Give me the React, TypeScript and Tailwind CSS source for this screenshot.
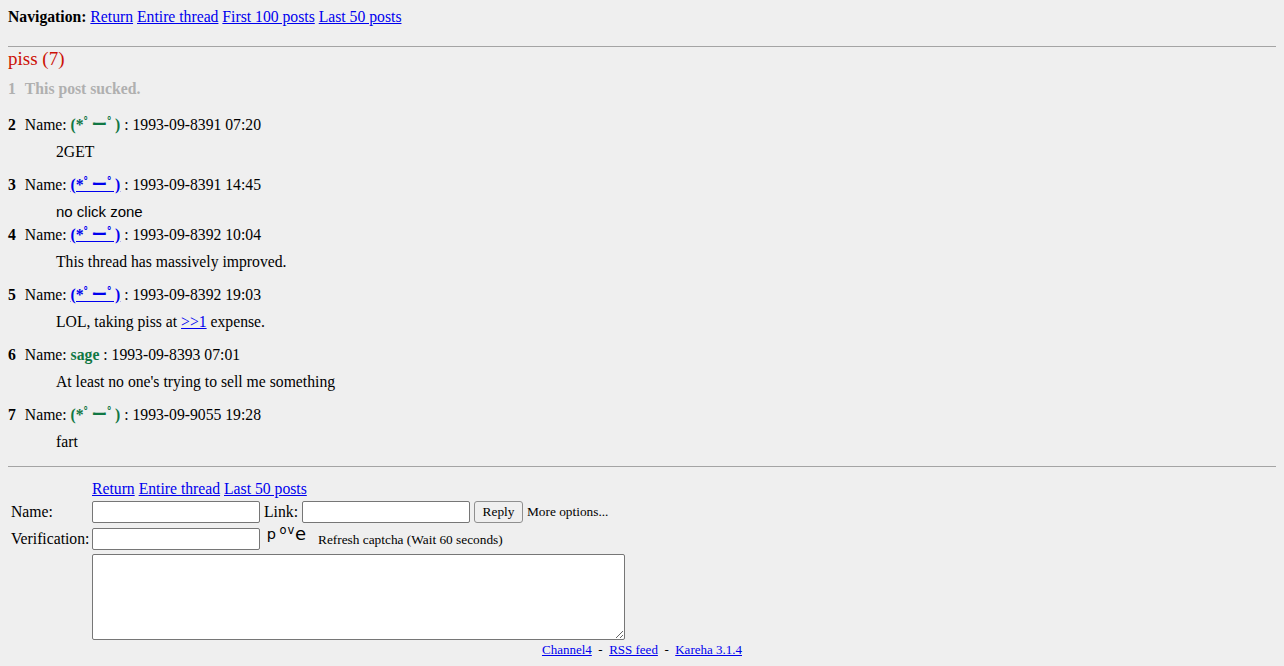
import React from "react";

type Post = {
  no: number;
  name: string;
  link?: boolean;
  date: string;
  body: React.ReactNode;
  sans?: boolean;
  tight?: boolean;
};

const FACE = "(*ﾟーﾟ)";

const posts: Post[] = [
  { no: 2, name: FACE, date: "1993-09-8391 07:20", body: "2GET" },
  { no: 3, name: FACE, link: true, date: "1993-09-8391 14:45", body: "no click zone", sans: true, tight: true },
  { no: 4, name: FACE, link: true, date: "1993-09-8392 10:04", body: "This thread has massively improved." },
  {
    no: 5,
    name: FACE,
    link: true,
    date: "1993-09-8392 19:03",
    body: (
      <>
        LOL, taking piss at{" "}
        <a href="#" className="text-[#0000ee] underline">
          &gt;&gt;1
        </a>{" "}
        expense.
      </>
    ),
  },
  { no: 6, name: "sage", date: "1993-09-8393 07:01", body: "At least no one's trying to sell me something" },
  { no: 7, name: FACE, date: "1993-09-9055 19:28", body: "fart" },
];

// captcha picture, letters jumbled like the generated image
const Captcha = () => (
  <svg width="50" height="22" viewBox="0 0 50 22" overflow="visible" className="block shrink-0">
    <g fill="#000" fontFamily="'DejaVu Sans', sans-serif">
      <text x="0.7" y="11" fontSize="14.5">p</text>
      <text x="13.5" y="6" fontSize="11.5">o</text>
      <text x="21.5" y="6" fontSize="11.5">v</text>
      <text x="29" y="11.5" fontSize="18">e</text>
    </g>
  </svg>
);

export default function App() {
  return (
    <div
      className="min-h-screen bg-[#efefef] p-2 text-[15.7px] leading-[18px] text-black"
      style={{ fontFamily: "'Liberation Serif', 'Noto Sans CJK JP', serif" }}
    >
      {/* top navigation */}
      <div>
        <b>Navigation:</b>{" "}
        <a href="#" className="text-[#0000ee] underline">Return</a>{" "}
        <a href="#" className="text-[#0000ee] underline">Entire thread</a>{" "}
        <a href="#" className="text-[#0000ee] underline">First 100 posts</a>{" "}
        <a href="#" className="text-[#0000ee] underline">Last 50 posts</a>
      </div>

      <div className="mt-[20px] border-t border-[#a4a4a4]" />

      <h2 className="text-[19px] leading-[23px] text-[#cc1105]">piss (7)</h2>

      {/* deleted post */}
      <div className="mt-[10px] font-bold text-[#b0b0b0]">
        <span className="mr-[9px]">1</span>This post sucked.
      </div>

      <div className="mt-[18px]">
        {posts.map((p) => (
          <div key={p.no} className={p.tight ? "mb-[5px]" : "mb-[15px]"}>
            <div className="whitespace-nowrap">
              <b className="mr-[9px]">{p.no}</b>
              Name:{" "}
              {p.link ? (
                <a href="#" className="font-bold text-[#0000ee] underline">{p.name}</a>
              ) : (
                <b className="text-[#117743]">{p.name}</b>
              )}{" "}
              : {p.date}
            </div>
            <div
              className={`mt-[9px] ml-[48px] ${p.sans ? "text-[15px]" : ""}`}
              style={p.sans ? { fontFamily: "'Liberation Sans', Arial, sans-serif" } : undefined}
            >
              {p.body}
            </div>
          </div>
        ))}
      </div>

      <div className="mt-[4px] border-t border-[#a4a4a4]" />

      {/* reply form */}
      <div className="ml-[3px] mt-[13px]">
        <div className="ml-[81px]">
          <a href="#" className="text-[#0000ee] underline">Return</a>{" "}
          <a href="#" className="text-[#0000ee] underline">Entire thread</a>{" "}
          <a href="#" className="text-[#0000ee] underline">Last 50 posts</a>
        </div>

        <div className="mt-[3px] flex items-center">
          <div className="w-[81px]">Name:</div>
          <input className="h-[22px] w-[168px] rounded-[2px] border border-[#767676] bg-white px-1" />
          <span className="ml-[4px] mr-[4px]">Link:</span>
          <input className="h-[22px] w-[168px] rounded-[2px] border border-[#767676] bg-white px-1" />
          <button className="ml-[4px] h-[22px] w-[49px] rounded-[3px] border border-[#8f8f8f] bg-[#efefef] text-[13.33px]">
            Reply
          </button>
          <span className="ml-[4px] text-[13.33px]">More options...</span>
        </div>

        <div className="mt-[5px] flex items-center">
          <div className="w-[81px]">Verification:</div>
          <input className="h-[22px] w-[168px] rounded-[2px] border border-[#767676] bg-white px-1" />
          <div className="ml-[6px] flex items-center">
            <Captcha />
            <span className="ml-[2px] mt-[2px] text-[13.33px] leading-[16px]">Refresh captcha (Wait 60 seconds)</span>
          </div>
        </div>

        <div className="mt-[4px] ml-[81px]">
          <textarea className="block h-[86px] w-[533px] rounded-[2px] border border-[#767676] bg-white" />
        </div>
      </div>

      <div className="mt-[2px] text-center text-[13px] leading-[16px]">
        <a href="#" className="text-[#0000ee] underline">Channel4</a>
        &nbsp; - &nbsp;
        <a href="#" className="text-[#0000ee] underline">RSS feed</a>
        &nbsp; - &nbsp;
        <a href="#" className="text-[#0000ee] underline">Kareha 3.1.4</a>
      </div>
    </div>
  );
}
